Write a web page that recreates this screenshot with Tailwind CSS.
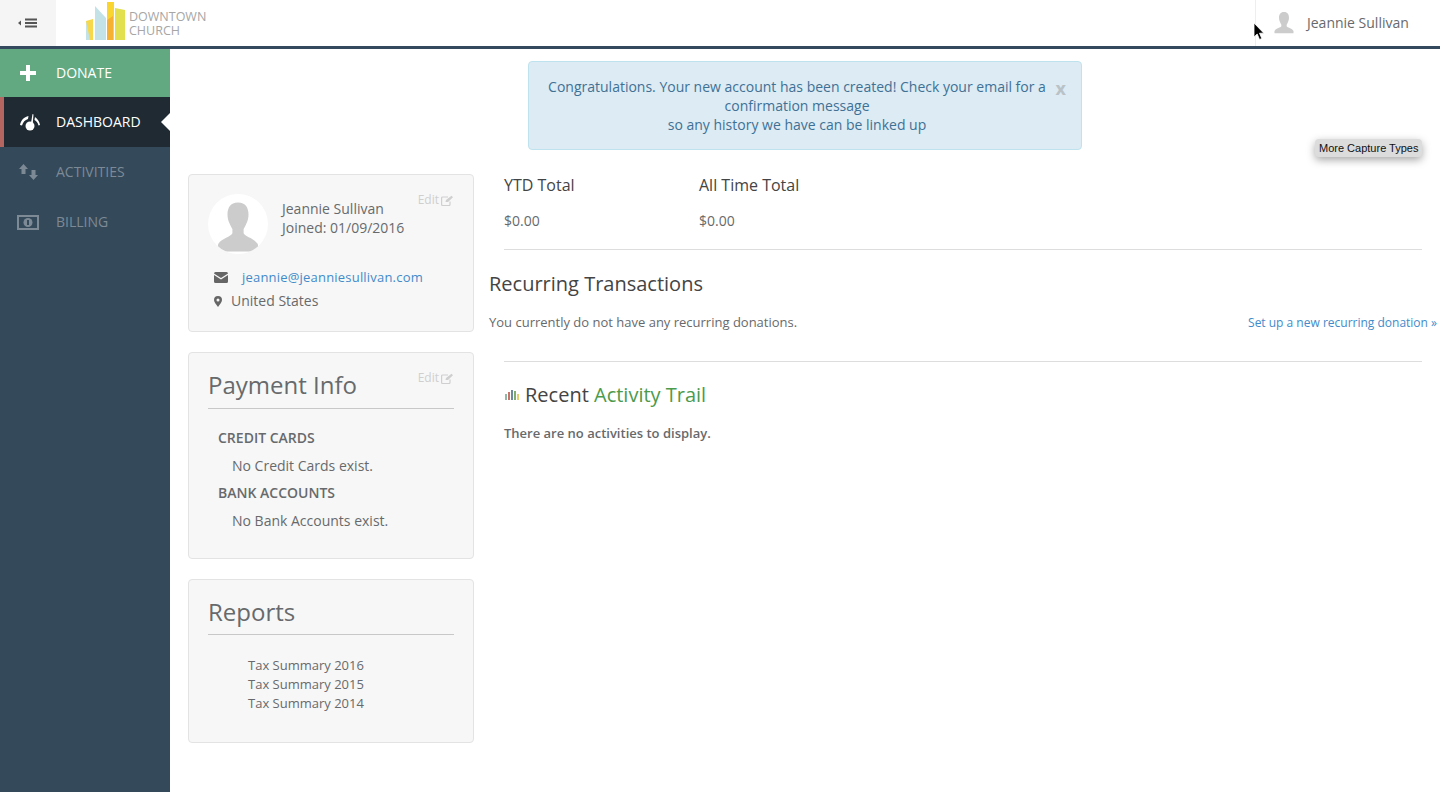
<!DOCTYPE html>
<html lang="en">
<head>
    <meta charset="UTF-8">
    <meta name="viewport" content="width=device-width, initial-scale=1.0">
    <title>Downtown Church - Dashboard</title>
    <script src="https://cdn.jsdelivr.net/npm/@tailwindcss/browser@4"></script>
</head>
<body class="bg-white text-[#676a6c] font-['Open_Sans',sans-serif] text-sm overflow-hidden">
<div class="relative w-[1440px] h-[792px] overflow-hidden">

    <!-- top bar -->
    <header class="flex items-stretch h-[49px] border-b-[3px] border-[#34495e] bg-white">
        <div class="w-14 bg-[#f5f5f5] flex items-center justify-center">
            <svg width="20" height="10" viewBox="0 0 20 10" fill="#555">
                <path d="M0 5 L3 2.5 V7.5 Z"/>
                <rect x="7" y="0.5" width="12" height="2"/>
                <rect x="7" y="4" width="12" height="2"/>
                <rect x="7" y="7.5" width="12" height="2"/>
            </svg>
        </div>
        <div class="flex items-center pl-[30px]">
            <svg width="41" height="39" viewBox="0 0 41 39" class="mt-[-4px]">
                <path d="M0 19 L7 17 V38 H0 Z" fill="#f7d84a"/>
                <path d="M0 19 L4 38 H0 Z" fill="#c3e2e8"/>
                <path d="M9 4 L20 16 V38 H9 Z" fill="#c3e2e8"/>
                <path d="M21 0 H28 V38 H21 Z" fill="#fbd52f"/>
                <path d="M21 18 L27 14 V38 H21 Z" fill="#f6b132"/>
                <path d="M29 6 L39 8 V38 H29 Z" fill="#e2e04e"/>
            </svg>
            <div class="ml-[2px] mt-[2px] font-['Open_Sans',sans-serif] text-[12.5px] leading-[14px] text-[#a6a6a6]">DOWNTOWN<br>CHURCH</div>
        </div>
        <div class="ml-auto flex items-center w-[185px] border-l border-[#eeeeee] pl-[18px]">
            <svg width="20" height="24" viewBox="0 0 60 70" fill="#cccccc">
                <path d="M30 2c-11 0-15 8-15 17 0 5 1 9 3 13 1 3 3 6 4 8v5c-2 4-15 6-20 13-1 2-1 6 0 8h56c1-2 1-6 0-8-5-7-18-9-20-13v-5c1-2 3-5 4-8 2-4 3-8 3-13 0-9-4-17-15-17z"/>
            </svg>
            <span class="ml-[13px] text-sm text-[#676a6c]">Jeannie Sullivan</span>
        </div>
    </header>

    <div class="flex h-[743px]">
        <!-- sidebar -->
        <nav class="w-[170px] bg-[#34495a] text-sm shrink-0">
            <a class="flex items-center h-12 bg-[#62a982] text-white">
                <span class="w-[56px] flex justify-center">
                    <svg width="16" height="16" viewBox="0 0 16 16" fill="#fff"><path d="M6 0h4v6h6v4h-6v6H6v-6H0V6h6z"/></svg>
                </span>
                <span>DONATE</span>
            </a>
            <a class="relative flex items-center h-[50px] bg-[#1f2a33] text-white border-l-4 border-[#b5655f]">
                <span class="w-[52px] flex justify-center">
                    <svg width="22" height="18" viewBox="0 0 22 18" fill="#fff">
                        <circle cx="11" cy="13" r="4.5"/>
                        <path d="M11.5 13 L13.5 1 L14.5 1.5 L13.5 13Z"/>
                        <path d="M1 12 C2 7 5 4 9.5 3 L9 6 C6 7 4 9 3 12.5Z"/>
                        <path d="M16 4 C19 6 20.5 9 21 12 L19.5 12.5 C19 10 17.5 8 15.5 7Z"/>
                    </svg>
                </span>
                <span>DASHBOARD</span>
                <span class="absolute right-0 top-[16px] w-0 h-0 border-y-[9px] border-y-transparent border-r-[9px] border-r-white"></span>
            </a>
            <a class="flex items-center h-[50px] text-[#7d8a96]">
                <span class="w-[56px] flex justify-center">
                    <svg width="19" height="16" viewBox="0 0 19 16" fill="#7d8a96">
                        <path d="M4.5 0 L9 5 H6.5 V10 H2.5 V5 H0 Z"/>
                        <path d="M14.5 16 L19 11 H16.5 V6 H12.5 V11 H10 Z"/>
                    </svg>
                </span>
                <span>ACTIVITIES</span>
            </a>
            <a class="flex items-center h-[50px] text-[#7d8a96]">
                <span class="w-[56px] flex justify-center">
                    <svg width="22" height="15" viewBox="0 0 22 15">
                        <rect width="22" height="15" fill="#7d8a96"/>
                        <rect x="2" y="2" width="18" height="11" fill="#34495a"/>
                        <circle cx="11" cy="7.5" r="4.5" fill="#7d8a96"/>
                        <rect x="10" y="5" width="2" height="5" fill="#34495a"/>
                    </svg>
                </span>
                <span>BILLING</span>
            </a>
        </nav>

        <!-- content -->
        <main class="flex-1 relative min-w-0">
            <div class="w-[554px] h-[89px] ml-[358px] mt-3 relative bg-[#dcebf4] border border-[#bfe3ee] rounded text-[#3f7195] text-center leading-[19px] pt-[15px] pl-[16px] pr-[32px]">
                Congratulations. Your new account has been created! Check your email for a confirmation message<br>so any history we have can be linked up
                <span class="absolute right-[15px] top-[15px] text-lg leading-[22px] font-bold text-[#b9c2c6]">x</span>
            </div>

            <div class="flex mt-6 pl-[18px]">
                <!-- left column -->
                <div class="w-[286px] shrink-0 flex flex-col gap-5">
                    <section class="relative h-[158px] bg-[#f7f7f7] border border-[#e3e3e3] rounded-sm px-[19px] pt-[19px]">
                        <span class="absolute right-[19px] top-[17px] text-xs text-[#cfcfcf] flex items-center gap-[2px]">Edit
                            <svg width="13" height="11" viewBox="0 0 13 11" fill="none" stroke="#cfcfcf" stroke-width="1.2"><path d="M9 6.5V9.5a1 1 0 0 1-1 1H1.6a1 1 0 0 1-1-1V3a1 1 0 0 1 1-1H7"/><path d="M4.5 7 5 5 10.5 0.8l1.5 1.5L7 7z" fill="#cfcfcf" stroke="none"/></svg>
                        </span>
                        <div class="flex">
                            <div class="w-[60px] h-[60px] rounded-full bg-white flex items-end justify-center overflow-hidden">
                                <svg width="42" height="50" viewBox="0 0 60 70" fill="#cccccc" class="mb-[2px]">
                                    <path d="M30 0c-11 0-15 8-15 17 0 5 1 9 3 13 1 3 3 6 4 8v6c-2 5-15 7-20 15-1 2-1 7 0 11h56c1-4 1-9 0-11-5-8-18-10-20-15v-6c1-2 3-5 4-8 2-4 3-8 3-13 0-9-4-17-15-17z"/>
                                </svg>
                            </div>
                            <div class="ml-[14px] pt-[5px] leading-[19px]">Jeannie Sullivan<br>Joined: 01/09/2016</div>
                        </div>
                        <div class="flex items-center mt-[11px] h-6 pl-[6px]">
                            <svg width="14" height="11" viewBox="0 0 14 11" fill="#666"><path d="M0 1.5A1.5 1.5 0 0 1 1.5 0h11A1.5 1.5 0 0 1 14 1.5L7 6 0 1.5z"/><path d="M0 3l7 4.5L14 3v6.5A1.5 1.5 0 0 1 12.5 11h-11A1.5 1.5 0 0 1 0 9.5z"/></svg>
                            <span class="ml-[14px] text-[13px] tracking-[0.2px] text-[#428bca]">jeannie@jeanniesullivan.com</span>
                        </div>
                        <div class="flex items-center h-6 pl-[6px]">
                            <svg width="8" height="11" viewBox="0 0 8 11" fill="#666"><path fill-rule="evenodd" d="M4 0a4 4 0 0 1 4 4c0 2-2.5 5-4 7-1.500-2-4-5-4-7a4 4 0 0 1 4-4zm0 2.500a1.500 1.500 0 1 0 0 3 1.500 1.500 0 0 0 0-3z"/></svg>
                            <span class="ml-[9px]">United States</span>
                        </div>
                    </section>

                    <section class="relative h-[207px] bg-[#f7f7f7] border border-[#e3e3e3] rounded-sm px-[19px] pt-[14px]">
                        <span class="absolute right-[19px] top-[17px] text-xs text-[#cfcfcf] flex items-center gap-[2px]">Edit
                            <svg width="13" height="11" viewBox="0 0 13 11" fill="none" stroke="#cfcfcf" stroke-width="1.2"><path d="M9 6.5V9.5a1 1 0 0 1-1 1H1.6a1 1 0 0 1-1-1V3a1 1 0 0 1 1-1H7"/><path d="M4.5 7 5 5 10.5 0.8l1.5 1.5L7 7z" fill="#cfcfcf" stroke="none"/></svg>
                        </span>
                        <h2 class="text-2xl leading-[36px] pb-[5px] border-b border-[#c8c8c8] text-[#676a6c]">Payment Info</h2>
                        <div class="pl-[10px] pt-[19px]">
                            <div class="font-semibold leading-[20px]">CREDIT CARDS</div>
                            <div class="pl-[14px] mt-[8px] leading-[19px]">No Credit Cards exist.</div>
                            <div class="font-semibold leading-[20px] mt-[8px]">BANK ACCOUNTS</div>
                            <div class="pl-[14px] mt-[8px] leading-[19px]">No Bank Accounts exist.</div>
                        </div>
                    </section>

                    <section class="h-[164px] bg-[#f7f7f7] border border-[#e3e3e3] rounded-sm px-[19px] pt-[15px]">
                        <h2 class="text-2xl leading-[34px] pb-[5px] border-b border-[#c8c8c8] text-[#676a6c]">Reports</h2>
                        <div class="pl-[40px] pt-[21px] text-[13px] leading-[19px]">
                            <div>Tax Summary 2016</div>
                            <div>Tax Summary 2015</div>
                            <div>Tax Summary 2014</div>
                        </div>
                    </section>
                </div>

                <!-- right column -->
                <div class="flex-1 min-w-0 pl-[15px]">
                    <div class="ml-[15px] mr-[18px] flex pb-[19px] border-b border-[#dddddd]">
                        <div class="w-[195px]">
                            <div class="text-base leading-[22px] text-[#444444]">YTD Total</div>
                            <div class="mt-[15px] leading-[19px]">$0.00</div>
                        </div>
                        <div>
                            <div class="text-base leading-[22px] text-[#444444]">All Time Total</div>
                            <div class="mt-[15px] leading-[19px]">$0.00</div>
                        </div>
                    </div>
                    <h2 class="text-xl leading-[28px] mt-5 text-[#444444]">Recurring Transactions</h2>
                    <div class="flex items-center justify-between mt-[15px] pr-[3px] text-[13px] leading-[19px]">
                        <span>You currently do not have any recurring donations.</span>
                        <span class="text-xs text-[#428bca]">Set up a new recurring donation »</span>
                    </div>
                    <div class="ml-[15px] mr-[18px] mt-[29px] border-t border-[#dddddd] pt-[19px]">
                        <div class="flex items-center">
                            <svg width="16" height="12" viewBox="0 0 16 12" class="mr-[5px]">
                                <rect x="1" y="5" width="2" height="6" fill="#8fb9a8"/>
                                <rect x="4" y="3" width="2" height="8" fill="#c9746b"/>
                                <rect x="7" y="1" width="2" height="10" fill="#6b8a9e"/>
                                <rect x="10" y="2" width="2" height="9" fill="#7fae6e"/>
                                <rect x="13" y="5" width="2" height="6" fill="#e2d06a"/>
                            </svg>
                            <h2 class="text-xl leading-[28px] text-[#444444]">Recent <span class="text-[#4c9a4c]">Activity Trail</span></h2>
                        </div>
                        <p class="mt-[15px] text-[13px] leading-[19px] font-semibold">There are no activities to display.</p>
                    </div>
                </div>
            </div>
        </main>
    </div>

    <!-- browser extension button and cursor, floating over the page -->
    <div class="absolute left-[1315px] top-[139px] h-[18px] px-[4px] bg-[#dcdcdc] rounded-sm shadow-[0_3px_8px_rgba(0,0,0,0.35)] font-['Liberation_Sans',sans-serif] text-[11px] leading-[18px] text-[#111] whitespace-nowrap">More Capture Types</div>
    <svg class="absolute left-[1253px] top-[22px]" width="12" height="19" viewBox="0 0 12 19">
        <path d="M1 1 V15 L4.200 12 L6.500 17.500 L8.800 16.500 L6.500 11.200 H10.800 Z" fill="#000" stroke="#fff" stroke-width="0.8"/>
    </svg>
</div>
</body>
</html>
